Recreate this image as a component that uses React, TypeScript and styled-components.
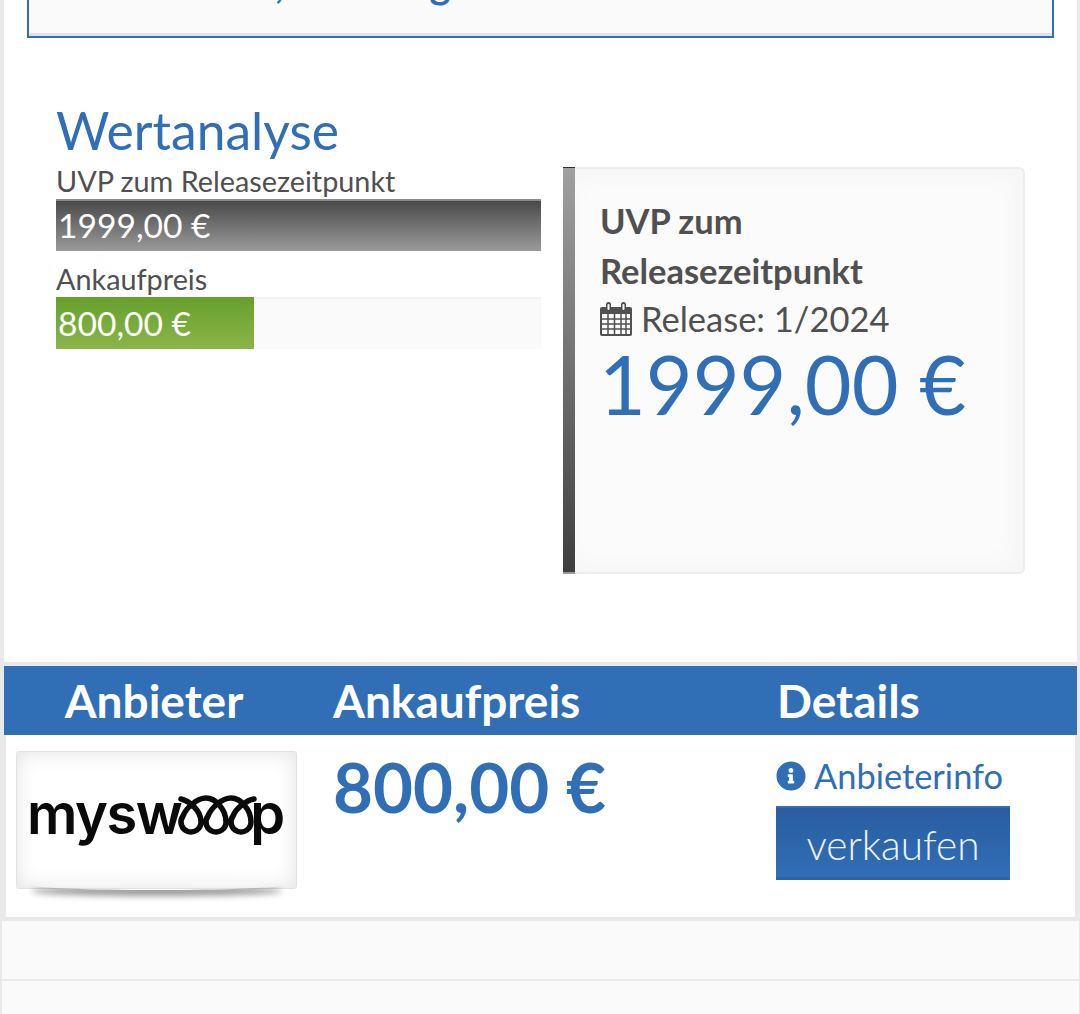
import React from "react";
import styled, { createGlobalStyle } from "styled-components";
import { FaInfoCircle } from "react-icons/fa";

const Global = createGlobalStyle`
  html, body { margin: 0; padding: 0; background: #e9e9e9; height: 1014px; overflow: hidden; }
  body { font-family: Lato, "Noto Sans", sans-serif; color: #505050; }
  * { box-sizing: border-box; }
`;

const BLUE = "#306fb6";

const Page = styled.div`
  height: 1014px;
  overflow: hidden;
  padding: 0 1px 0 2px;
`;
const Sheet = styled.main`
  display: flow-root;
  margin: 0 2px;
  background: #fff;
  padding: 0 23px;
  height: 662px;
`;
const TopBox = styled.section`
  margin-top: -60px;
  height: 98px;
  border: 2px solid ${BLUE};
  border-top: 0;
  background: #fafafa;
  box-shadow: inset 0 -3px 0 #e2e2e2;
  overflow: hidden;
`;
const TopTitle = styled.h2`
  margin: 0;
  padding: 20px 0 0 158px;
  font-size: 40px;
  line-height: 46px;
  font-weight: 700;
  color: ${BLUE};
  white-space: nowrap;
`;
const Analysis = styled.section`
  padding: 62px 29px 0;
  display: grid;
  grid-template-columns: 485px 462px;
  column-gap: 22px;
`;
const Heading = styled.h1`
  grid-column: 1 / 3;
  margin: 0;
  font-size: 51.600px;
  line-height: 60px;
  font-weight: 400;
  color: ${BLUE};
  height: 67px;
`;
const Bars = styled.div``;
const BarLabel = styled.div`
  font-size: 28.800px;
  line-height: 28px;
  height: 32px;
  color: #505050;
`;
const Track = styled.div`
  height: 52px;
  background: #fafafa;
  box-shadow: inset 0 2px 2px #f0f0f0;
  margin-bottom: 14px;
`;
const Fill = styled.div<{ $tone: "dark" | "green" }>`
  height: 100%;
  padding-left: 2px;
  font-size: 33.600px;
  line-height: 48px;
  color: #fff;
  white-space: nowrap;
  background: ${(p) =>
    p.$tone === "dark"
      ? "linear-gradient(#4a4a4a, #9a9a9a)"
      : "linear-gradient(#67a12c, #8bb549)"};
  border-top: 2px solid ${(p) => (p.$tone === "dark" ? "#8a8a8a" : "#67a12c")};
`;
const Card = styled.aside`
  height: 407px;
  display: flex;
  border: 2px solid #ededed;
  border-left: 0;
  border-radius: 0 6px 6px 0;
  background: #fbfbfb;
  box-shadow: inset 0 0 30px #f3f3f3;
`;
const CardStripe = styled.div`
  width: 12px;
  margin: -2px 0;
  flex: none;
  background: linear-gradient(#a0a0a0, #3e3e3e);
  border-top: 1px solid #333;
  border-bottom: 2px solid #999;
`;
const CardBody = styled.div`
  padding: 27px 25px 0 25px;
`;
const CardTitle = styled.h3`
  margin: 0;
  font-size: 34.500px;
  line-height: 49.500px;
  font-weight: 700;
  color: #505050;
`;
const ReleaseLine = styled.div`
  display: flex;
  align-items: center;
  gap: 9px;
  font-size: 34.500px;
  line-height: 46px;
  margin-top: 1px;
  color: #505050;
`;
const Amount = styled.div`
  font-size: 80.800px;
  line-height: 86px;
  color: ${BLUE};
  white-space: nowrap;
  margin: -1px 0 0 -1px;
`;
const Results = styled.section`
  margin: 4px 2px 0;
`;
const HeaderRow = styled.div`
  display: grid;
  grid-template-columns: 329px 444px 1fr;
  height: 69px;
  background: ${BLUE};
  color: #fff;
  font-size: 46px;
  font-weight: 700;
  line-height: 70px;
`;
const HeadCell = styled.div<{ $center?: boolean }>`
  text-align: ${(p) => (p.$center ? "center" : "left")};
  padding-right: ${(p) => (p.$center ? "29px" : "0")};
`;
const OfferRow = styled.div`
  margin: 0 2px;
  height: 182px;
  background: #fff;
  display: grid;
  grid-template-columns: 327px 443px 1fr;
`;
const LogoCell = styled.div`
  padding: 16px 0 0 10px;
`;
const LogoBox = styled.div`
  position: relative;
  width: 281px;
  height: 138px;
  display: flex;
  align-items: flex-start;
  padding: 28px 0 0 10px;
  background: #fff;
  border: 1px solid #e2e2e2;
  border-radius: 3px;
  box-shadow: inset 0 0 20px #e2e2e2;
  &::after {
    content: "";
    position: absolute;
    left: 14px;
    right: 14px;
    bottom: -2px;
    height: 10px;
    border-radius: 50%;
    box-shadow: 0 6px 6px rgba(0, 0, 0, 0.4);
  }
`;
const LogoMark = styled.div`
  display: flex;
  align-items: flex-start;
  filter: blur(0.7px);
`;
const LogoText = styled.span`
  font-family: Inter, sans-serif;
  font-weight: 600;
  font-size: 56px;
  line-height: 68px;
  letter-spacing: -1.500px;
  color: #0a0a0a;
`;
const LogoLoops = styled.svg`
  width: 84px;
  height: 52px;
  flex: none;
  margin: 10px -9px 0 -6px;
`;
const PriceCell = styled.div`
  font-size: 69px;
  font-weight: 700;
  line-height: 74px;
  color: ${BLUE};
  padding-top: 15px;
`;
const DetailCell = styled.div`
  padding-top: 15px;
`;
const InfoLink = styled.a`
  display: flex;
  align-items: center;
  gap: 8px;
  font-size: 34.400px;
  line-height: 40px;
  color: ${BLUE};
  height: 56px;
  padding-bottom: 4px;
  svg { width: 30px; height: 30px; }
`;
const SellButton = styled.button`
  display: block;
  width: 234px;
  height: 74px;
  padding: 3px 0 0;
  border: 0;
  border-top: 2px solid ${BLUE};
  border-bottom: 3px solid #2c64a6;
  background: linear-gradient(#2a5c9f, ${BLUE});
  color: #eef4fb;
  font-family: Lato, sans-serif;
  font-weight: 300;
  font-size: 40.600px;
`;
const EmptyRow = styled.div`
  margin-top: 4px;
  height: 58px;
  background: #fafafa;
  & + & { margin-top: 2px; height: 40px; }
`;

const CalendarIcon = () => (
  <svg width="32" height="34" viewBox="0 0 32 34" fill="none">
    <path d="M2 5h28a2 2 0 0 1 2 2v25a2 2 0 0 1-2 2H2a2 2 0 0 1-2-2V7a2 2 0 0 1 2-2z" fill="#505050" />
    <rect x="2" y="12" width="28" height="20" fill="#fafafa" />
    <path d="M2 17h28M2 22h28M2 27h28M8 12v20M14.500 12v20M21 12v20M26 12v20" stroke="#505050" strokeWidth="1.500" />
    <rect x="6" y="0" width="5" height="9" rx="2.500" fill="#505050" />
    <rect x="21" y="0" width="5" height="9" rx="2.500" fill="#505050" />
    <rect x="7.500" y="2" width="2" height="6" rx="1" fill="#fafafa" />
    <rect x="22.500" y="2" width="2" height="6" rx="1" fill="#fafafa" />
  </svg>
);

const Loops = () => (
  <LogoLoops viewBox="0 0 84 52" fill="none" stroke="#0a0a0a" strokeWidth="5.500" strokeLinecap="round">
    <path d="M6 9C14 11 26 20 26 32A10 10 0 1 1 8 26C11 18 22 8 31 8C41 8 51 20 51 32A10 10 0 1 1 33 26C36 18 47 8 56 8C66 8 76 20 76 32A10 10 0 1 1 58 26C61 18 72 10 79 9" />
  </LogoLoops>
);

export default function App() {
  return (
    <Page>
      <Global />
      <Sheet>
        <TopBox>
          <TopTitle>Preis, Wertung</TopTitle>
        </TopBox>
        <Analysis>
          <Heading>Wertanalyse</Heading>
          <Bars>
            <BarLabel>UVP zum Releasezeitpunkt</BarLabel>
            <Track>
              <Fill $tone="dark" style={{ width: "100%" }}>1999,00 €</Fill>
            </Track>
            <BarLabel>Ankaufpreis</BarLabel>
            <Track>
              <Fill $tone="green" style={{ width: `${(198 / 485) * 100}%` }}>800,00 €</Fill>
            </Track>
          </Bars>
          <Card>
            <CardStripe />
            <CardBody>
              <CardTitle>UVP zum<br />Releasezeitpunkt</CardTitle>
              <ReleaseLine><CalendarIcon />Release: 1/2024</ReleaseLine>
              <Amount>1999,00 €</Amount>
            </CardBody>
          </Card>
        </Analysis>
      </Sheet>
      <Results>
        <HeaderRow>
          <HeadCell $center>Anbieter</HeadCell>
          <HeadCell>Ankaufpreis</HeadCell>
          <HeadCell>Details</HeadCell>
        </HeaderRow>
        <OfferRow>
          <LogoCell>
            <LogoBox>
              <LogoMark>
                <LogoText>mysw</LogoText>
                <Loops />
                <LogoText>p</LogoText>
              </LogoMark>
            </LogoBox>
          </LogoCell>
          <PriceCell>800,00 €</PriceCell>
          <DetailCell>
            <InfoLink><FaInfoCircle />Anbieterinfo</InfoLink>
            <SellButton>verkaufen</SellButton>
          </DetailCell>
        </OfferRow>
      </Results>
      <EmptyRow />
      <EmptyRow />
    </Page>
  );
}
